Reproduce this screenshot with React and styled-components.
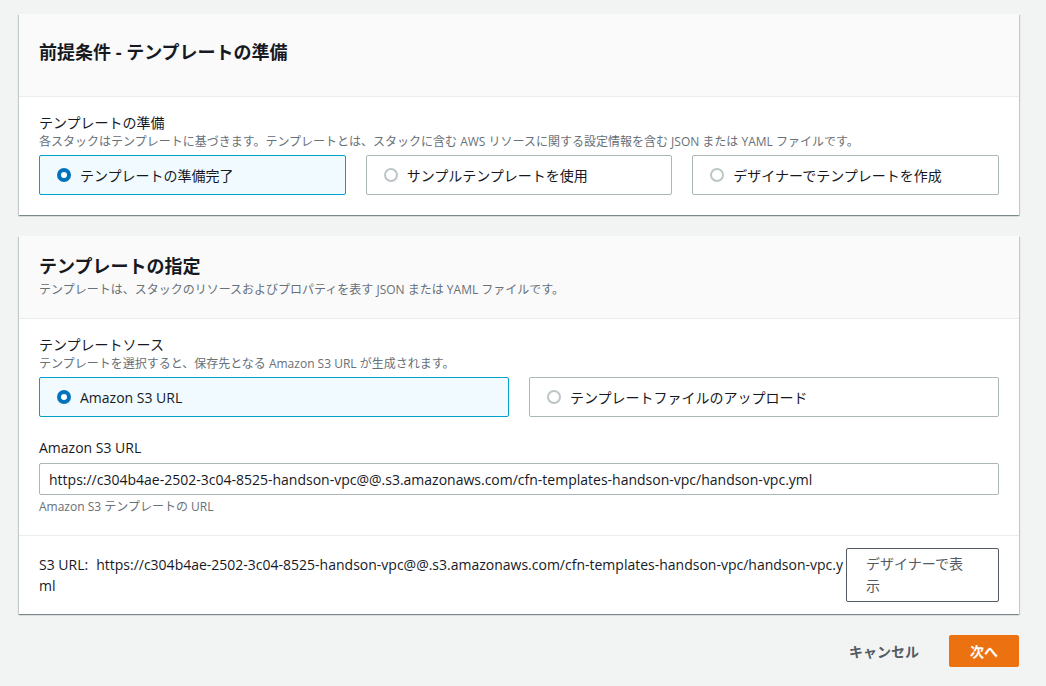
import React from 'react';
import styled, {createGlobalStyle} from 'styled-components';

const GlobalStyle = createGlobalStyle`
  body {
    margin: 0;
    background: #f2f3f3;
    font-family: "Open Sans", "Noto Sans CJK JP", sans-serif;
    color: #16191f;
    font-size: 14px;
  }
`;

const Page = styled.div`
  padding: 14px 27px 20px 19px;
  display: flex;
  flex-direction: column;
  gap: 21px;
`;

const Card = styled.section`
  background: #fff;
  box-shadow: 0 1px 1px 0 rgba(0, 28, 36, 0.3), 1px 1px 1px 0 rgba(0, 28, 36, 0.15), -1px 1px 1px 0 rgba(0, 28, 36, 0.15);
`;

const CardHeader = styled.div`
  background: #fafafa;
  border-bottom: 1px solid #eaeded;
  padding: ${p => p.$pad || '18px 20px 19px'};
`;

const Title = styled.h2`
  margin: 0;
  font-size: 18px;
  line-height: 24px;
  font-weight: 700;
`;

const HeaderDesc = styled.div`
  margin-top: 3px;
  font-size: 12px;
  line-height: 18px;
  color: #687078;
`;

const CardBody = styled.div`
  padding: 16px 20px 20px;
`;

const Label = styled.div`
  font-size: 14px;
  line-height: 20px;
  margin-top: ${p => p.$top || 0}px;
`;

const Desc = styled.div`
  font-size: 12px;
  line-height: 18px;
  color: #687078;
`;

const Tiles = styled.div`
  display: grid;
  grid-template-columns: repeat(${p => p.$cols}, 1fr);
  gap: 20px;
  margin-top: 4px;
`;

const Tile = styled.label`
  display: flex;
  align-items: center;
  gap: 9px;
  height: 40px;
  box-sizing: border-box;
  padding-left: 17px;
  border: 1px solid ${p => (p.$checked ? '#00a1c9' : '#aab7b8')};
  background: ${p => (p.$checked ? '#f1faff' : '#fff')};
  border-radius: 2px;
  font-size: 14px;
`;

const Radio = styled.span`
  width: 14px;
  height: 14px;
  box-sizing: border-box;
  border-radius: 50%;
  border: ${p => (p.$checked ? '4px solid #0073bb' : '2px solid #bcc6c7')};
  background: #fff;
  flex-shrink: 0;
`;

const Input = styled.input`
  display: block;
  width: 100%;
  box-sizing: border-box;
  height: 32px;
  margin-top: 5px;
  padding: 0 9px;
  border: 1px solid #aab7b8;
  border-radius: 2px;
  font: inherit;
  font-size: 14px;
  color: #16191f;
`;

const Hint = styled.div`
  margin-top: 4px;
  font-size: 12px;
  line-height: 16px;
  color: #687078;
`;

const CardFooter = styled.div`
  border-top: 1px solid #eaeded;
  padding: 12px 20px;
  display: flex;
  align-items: center;
  justify-content: space-between;
`;

const UrlText = styled.div`
  flex: 1;
  line-height: 21px;
  word-break: break-all;
`;

const UrlLabel = styled.span`
  margin-right: 8px;
`;

const Button = styled.button`
  font: inherit;
  font-size: 14px;
  line-height: 22px;
  text-align: left;
  background: #fff;
  color: #545b64;
  border: 1px solid #545b64;
  border-radius: 2px;
  width: 153px;
  flex-shrink: 0;
  padding: 4px 28px 4px 19px;
`;

const Actions = styled.div`
  display: flex;
  justify-content: flex-end;
  align-items: center;
  gap: 30px;
`;

const LinkButton = styled.button`
  font: inherit;
  font-weight: 700;
  font-size: 14px;
  color: #545b64;
  background: none;
  border: none;
  padding: 0;
`;

const PrimaryButton = styled.button`
  font: inherit;
  font-weight: 700;
  font-size: 14px;
  color: #fff;
  background: #ec7211;
  border: 1px solid #ec7211;
  border-radius: 2px;
  width: 70px;
  height: 32px;
`;

const url = 'https://c304b4ae-2502-3c04-8525-handson-vpc@@.s3.amazonaws.com/cfn-templates-handson-vpc/handson-vpc.yml';

const Option = ({checked, children}) => (
  <Tile $checked={checked}>
    <Radio $checked={checked} />
    {children}
  </Tile>
);

export default function App() {
  return (
    <Page>
      <GlobalStyle />
      <Card>
        <CardHeader $pad="26px 20px 32px">
          <Title>前提条件 - テンプレートの準備</Title>
        </CardHeader>
        <CardBody>
          <Label>テンプレートの準備</Label>
          <Desc>各スタックはテンプレートに基づきます。テンプレートとは、スタックに含む AWS リソースに関する設定情報を含む JSON または YAML ファイルです。</Desc>
          <Tiles $cols={3}>
            <Option checked>テンプレートの準備完了</Option>
            <Option>サンプルテンプレートを使用</Option>
            <Option>デザイナーでテンプレートを作成</Option>
          </Tiles>
        </CardBody>
      </Card>

      <Card>
        <CardHeader>
          <Title>テンプレートの指定</Title>
          <HeaderDesc>テンプレートは、スタックのリソースおよびプロパティを表す JSON または YAML ファイルです。</HeaderDesc>
        </CardHeader>
        <CardBody>
          <Label>テンプレートソース</Label>
          <Desc>テンプレートを選択すると、保存先となる Amazon S3 URL が生成されます。</Desc>
          <Tiles $cols={2}>
            <Option checked>Amazon S3 URL</Option>
            <Option>テンプレートファイルのアップロード</Option>
          </Tiles>
          <Label $top={21}>Amazon S3 URL</Label>
          <Input defaultValue={url} />
          <Hint>Amazon S3 テンプレートの URL</Hint>
        </CardBody>
        <CardFooter>
          <UrlText><UrlLabel>S3 URL:</UrlLabel>{url}</UrlText>
          <Button>デザイナーで表示</Button>
        </CardFooter>
      </Card>

      <Actions>
        <LinkButton>キャンセル</LinkButton>
        <PrimaryButton>次へ</PrimaryButton>
      </Actions>
    </Page>
  );
}
